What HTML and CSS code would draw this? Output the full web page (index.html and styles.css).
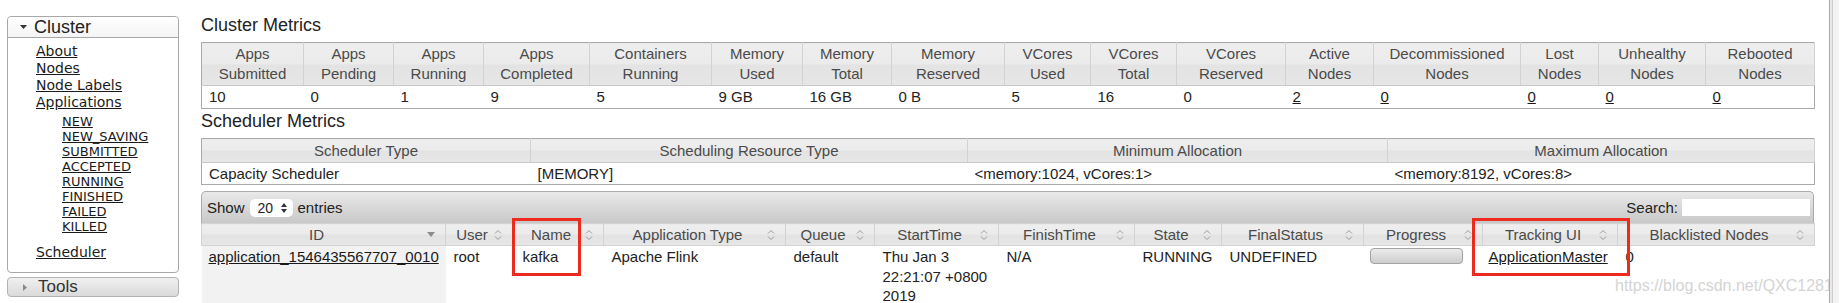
FILE: index.html
```html
<!DOCTYPE html>
<html>
<head>
<meta charset="utf-8">
<title>All Applications</title>
<link rel="stylesheet" href="styles.css">
</head>
<body>
<div class="sidebar">
  <div class="acc-box">
    <div class="acc-head"><svg class="tri-down" width="7" height="4" viewBox="0 0 7 4"><polygon points="0,0 7,0 3.5,4" fill="#333"/></svg><span>Cluster</span></div>
    <div class="acc-body">
      <a href="#" class="nav">About</a>
      <a href="#" class="nav">Nodes</a>
      <a href="#" class="nav">Node Labels</a>
      <a href="#" class="nav">Applications</a>
      <div class="sub">
        <a href="#">NEW</a>
        <a href="#">NEW_SAVING</a>
        <a href="#">SUBMITTED</a>
        <a href="#">ACCEPTED</a>
        <a href="#">RUNNING</a>
        <a href="#">FINISHED</a>
        <a href="#">FAILED</a>
        <a href="#">KILLED</a>
      </div>
      <a href="#" class="nav sched">Scheduler</a>
    </div>
  </div>
  <div class="tools"><svg class="tri-right" width="4" height="7" viewBox="0 0 4 7"><polygon points="0,0 4,3.5 0,7" fill="#8a8a8a"/></svg><span>Tools</span></div>
</div>

<div class="main">
  <h3 class="title">Cluster Metrics</h3>
  <table class="grid metrics">
    <colgroup>
      <col class="m1"><col class="m2"><col class="m3"><col class="m4"><col class="m5"><col class="m6"><col class="m7"><col class="m8"><col class="m9"><col class="m10"><col class="m11"><col class="m12"><col class="m13"><col class="m14"><col class="m15"><col class="m16">
    </colgroup>
    <tr>
      <th>Apps<br>Submitted</th><th>Apps<br>Pending</th><th>Apps<br>Running</th><th>Apps<br>Completed</th><th>Containers<br>Running</th><th>Memory<br>Used</th><th>Memory<br>Total</th><th>Memory<br>Reserved</th><th>VCores<br>Used</th><th>VCores<br>Total</th><th>VCores<br>Reserved</th><th>Active<br>Nodes</th><th>Decommissioned<br>Nodes</th><th>Lost<br>Nodes</th><th>Unhealthy<br>Nodes</th><th>Rebooted<br>Nodes</th>
    </tr>
    <tr>
      <td>10</td><td>0</td><td>1</td><td>9</td><td>5</td><td>9 GB</td><td>16 GB</td><td>0 B</td><td>5</td><td>16</td><td>0</td><td><a href="#">2</a></td><td><a href="#">0</a></td><td><a href="#">0</a></td><td><a href="#">0</a></td><td><a href="#">0</a></td>
    </tr>
  </table>

  <h3 class="title second">Scheduler Metrics</h3>
  <table class="grid sched-t">
    <colgroup><col class="s1"><col class="s2"><col class="s3"><col class="s4"></colgroup>
    <tr><th>Scheduler Type</th><th>Scheduling Resource Type</th><th>Minimum Allocation</th><th>Maximum Allocation</th></tr>
    <tr><td>Capacity Scheduler</td><td>[MEMORY]</td><td>&lt;memory:1024, vCores:1&gt;</td><td>&lt;memory:8192, vCores:8&gt;</td></tr>
  </table>

  <div class="apps">
    <div class="toolbar">
      <div class="show">Show <span class="select">20 <svg width="6" height="10" viewBox="0 0 6 10"><polygon points="0,4 3,0 6,4" fill="#333"/><polygon points="0,6 6,6 3,10" fill="#333"/></svg></span> entries</div>
      <div class="search">Search: <span class="input"></span></div>
    </div>
    <table class="apps-t">
      <colgroup>
        <col class="a1"><col class="a2"><col class="a3"><col class="a4"><col class="a5"><col class="a6"><col class="a7"><col class="a8"><col class="a9"><col class="a10"><col class="a11"><col class="a12">
      </colgroup>
      <tr>
        <th><div class="thc"><span class="lbl">ID</span><svg class="desc" width="8" height="5" viewBox="0 0 8 5"><polygon points="0,0 8,0 4,5" fill="#8c8c8c"/></svg></div></th>
        <th><div class="thc"><span class="lbl">User</span><svg class="si" width="8" height="12" viewBox="0 0 8 12"><path d="M1 4.5 4 1.5 7 4.5M1 7.5 4 10.5 7 7.5" fill="none" stroke="#9a9a9a"/></svg></div></th>
        <th><div class="thc"><span class="lbl">Name</span><svg class="si" width="8" height="12" viewBox="0 0 8 12"><path d="M1 4.5 4 1.5 7 4.5M1 7.5 4 10.5 7 7.5" fill="none" stroke="#9a9a9a"/></svg></div></th>
        <th><div class="thc"><span class="lbl">Application Type</span><svg class="si" width="8" height="12" viewBox="0 0 8 12"><path d="M1 4.5 4 1.5 7 4.5M1 7.5 4 10.5 7 7.5" fill="none" stroke="#9a9a9a"/></svg></div></th>
        <th><div class="thc"><span class="lbl">Queue</span><svg class="si" width="8" height="12" viewBox="0 0 8 12"><path d="M1 4.5 4 1.5 7 4.5M1 7.5 4 10.5 7 7.5" fill="none" stroke="#9a9a9a"/></svg></div></th>
        <th><div class="thc"><span class="lbl">StartTime</span><svg class="si" width="8" height="12" viewBox="0 0 8 12"><path d="M1 4.5 4 1.5 7 4.5M1 7.5 4 10.5 7 7.5" fill="none" stroke="#9a9a9a"/></svg></div></th>
        <th><div class="thc"><span class="lbl">FinishTime</span><svg class="si" width="8" height="12" viewBox="0 0 8 12"><path d="M1 4.5 4 1.5 7 4.5M1 7.5 4 10.5 7 7.5" fill="none" stroke="#9a9a9a"/></svg></div></th>
        <th><div class="thc"><span class="lbl">State</span><svg class="si" width="8" height="12" viewBox="0 0 8 12"><path d="M1 4.5 4 1.5 7 4.5M1 7.5 4 10.5 7 7.5" fill="none" stroke="#9a9a9a"/></svg></div></th>
        <th><div class="thc"><span class="lbl">FinalStatus</span><svg class="si" width="8" height="12" viewBox="0 0 8 12"><path d="M1 4.5 4 1.5 7 4.5M1 7.5 4 10.5 7 7.5" fill="none" stroke="#9a9a9a"/></svg></div></th>
        <th><div class="thc"><span class="lbl">Progress</span><svg class="si" width="8" height="12" viewBox="0 0 8 12"><path d="M1 4.5 4 1.5 7 4.5M1 7.5 4 10.5 7 7.5" fill="none" stroke="#9a9a9a"/></svg></div></th>
        <th><div class="thc"><span class="lbl">Tracking UI</span><svg class="si" width="8" height="12" viewBox="0 0 8 12"><path d="M1 4.5 4 1.5 7 4.5M1 7.5 4 10.5 7 7.5" fill="none" stroke="#9a9a9a"/></svg></div></th>
        <th><div class="thc"><span class="lbl">Blacklisted Nodes</span><svg class="si" width="8" height="12" viewBox="0 0 8 12"><path d="M1 4.5 4 1.5 7 4.5M1 7.5 4 10.5 7 7.5" fill="none" stroke="#9a9a9a"/></svg></div></th>
      </tr>
      <tr>
        <td class="sorted"><a href="#">application_1546435567707_0010</a></td>
        <td>root</td>
        <td class="name-cell">kafka</td>
        <td>Apache Flink</td>
        <td>default</td>
        <td>Thu Jan 3 22:21:07 +0800 2019</td>
        <td>N/A</td>
        <td>RUNNING</td>
        <td>UNDEFINED</td>
        <td class="prog-cell"><div class="progress"></div></td>
        <td class="track-cell"><a href="#">ApplicationMaster</a></td>
        <td>0</td>
      </tr>
    </table>
    <div class="mark mark-name"></div>
    <div class="mark mark-track"></div>
  </div>
</div>

<div class="strip"></div>
<div class="watermark">https://blog.csdn.net/QXC1281</div>
</body>
</html>
```

FILE: styles.css
```css
html, body {
  margin: 0;
  padding: 0;
  height: 303px;
  overflow: hidden;
  background: #fff;
}
body {
  display: flex;
  align-items: flex-start;
  font-family: "Liberation Sans", Arial, sans-serif;
  color: #222;
  position: relative;
}
a { color: #1a1a1a; text-decoration: underline; }

/* ---------- sidebar ---------- */
.sidebar {
  flex: none;
  width: 172px;
  margin: 16px 0 0 7px;
}
.acc-box {
  border: 1px solid #a8a8a8;
  border-radius: 4px;
  background: #fff;
}
.acc-head {
  height: 20px;
  border-bottom: 1px solid #a8a8a8;
  border-radius: 4px 4px 0 0;
  background: linear-gradient(#ffffff, #f4f4f4);
  display: flex;
  align-items: center;
  padding-left: 12px;
  font-size: 18px;
  color: #222;
}
.acc-head .tri-down { margin-right: 7px; }
.acc-body {
  padding: 5px 0 11px 28px;
  font-family: "DejaVu Sans", Verdana, sans-serif;
  font-size: 14px;
  line-height: 17px;
}
.acc-body a { display: block; width: max-content; }
.sub {
  margin: 3px 0 0 26px;
  font-size: 13px;
  line-height: 15px;
}
.acc-body .sched { margin-top: 10px; }
.tools {
  margin-top: 4px;
  height: 18px;
  border: 1px solid #b3b3b3;
  border-radius: 4px;
  background: linear-gradient(#f0f0f0, #dadada);
  display: flex;
  align-items: center;
  padding-left: 15px;
  font-size: 17px;
  color: #333;
}
.tools .tri-right { margin-right: 11px; }

/* ---------- main ---------- */
.main {
  flex: none;
  width: 1613px;
  margin-left: 22px;
  padding-top: 14px;
}
.title {
  margin: 0 0 6px;
  font-size: 18px;
  font-weight: normal;
  line-height: 22px;
  color: #222;
}
.title.second { margin-top: 1px; }

.grid {
  width: 1613px;
  table-layout: fixed;
  border-collapse: collapse;
  border: 1px solid #a9a9a9;
  font-size: 15px;
}
.grid th, .apps-t th {
  font-weight: normal;
  color: #4a4a4a;
  background: linear-gradient(#eeeeee 0%, #ebebeb 50%, #e3e3e3 50%, #e6e6e6 100%);
  border-right: 1px solid #d2d2d2;
  border-bottom: 1px solid #c9c9c9;
  padding: 0 2px;
  text-align: center;
  white-space: nowrap;
}
.grid td {
  padding: 0 7px;
  white-space: nowrap;
  color: #222;
}
.metrics th { height: 42px; line-height: 20px; }
.metrics td { height: 22px; line-height: 22px; }
.sched-t th { height: 23px; line-height: 23px; }
.sched-t td { height: 21px; line-height: 21px; }

.m1 { width: 102px; } .m2 { width: 90px; } .m3 { width: 90px; } .m4 { width: 106px; }
.m5 { width: 122px; } .m6 { width: 91px; } .m7 { width: 89px; } .m8 { width: 113px; }
.m9 { width: 86px; } .m10 { width: 86px; } .m11 { width: 109px; } .m12 { width: 88px; }
.m13 { width: 147px; } .m14 { width: 78px; } .m15 { width: 107px; } .m16 { width: 109px; }

.s1 { width: 329px; } .s2 { width: 437px; } .s3 { width: 420px; } .s4 { width: 427px; }

/* ---------- applications ---------- */
.apps {
  position: relative;
  margin-top: 6px;
}
.toolbar {
  height: 31px;
  border: 1px solid #ababab;
  border-bottom: none;
  border-radius: 5px 5px 0 0;
  background: linear-gradient(#e9e9e9, #c8c8c8);
  display: flex;
  justify-content: space-between;
  align-items: center;
  padding: 0 3px 0 5px;
  font-size: 15px;
  color: #222;
}
.show { display: flex; align-items: center; }
.select {
  display: inline-flex;
  align-items: center;
  justify-content: space-between;
  width: 43px;
  height: 18px;
  box-sizing: border-box;
  margin: 0 5px;
  padding: 0 6px 0 8px;
  background: #fff;
  border-radius: 5px;
  font-size: 14px;
}
.search { display: flex; align-items: center; }
.input {
  display: inline-block;
  width: 128px;
  height: 17px;
  margin-left: 4px;
  background: #fff;
}

.apps-t {
  width: 1613px;
  table-layout: fixed;
  border-collapse: collapse;
  font-size: 15px;
}
.apps-t th {
  height: 21px;
  padding: 0 10px;
  border: 1px solid #d3d3d3;
}
.thc {
  display: flex;
  align-items: center;
  gap: 6px;
}
.lbl { flex: 1; text-align: center; }
.si, .desc { flex: none; }
.apps-t td {
  vertical-align: top;
  padding: 1px 8px 8px;
  line-height: 19.5px;
  color: #222;
}
.apps-t td.sorted {
  background: #f2f2f2;
  padding-left: 7px;
  padding-right: 0;
  white-space: nowrap;
}
.apps-t td.name-cell { padding-left: 10px; }
.apps-t td.prog-cell, .apps-t td.track-cell { padding-left: 6px; }
.progress {
  width: 91px;
  height: 14px;
  margin-top: 1px;
  border: 1px solid #a4a4a4;
  border-radius: 4px;
  background: linear-gradient(#ececec, #cdcdcd);
}

.a1 { width: 244px; } .a2 { width: 67px; } .a3 { width: 91px; } .a4 { width: 182px; }
.a5 { width: 89px; } .a6 { width: 124px; } .a7 { width: 136px; } .a8 { width: 87px; }
.a9 { width: 142px; } .a10 { width: 119px; } .a11 { width: 135px; } .a12 { width: 197px; }

.mark {
  position: absolute;
  top: 27px;
  height: 58px;
  box-sizing: border-box;
  border: 3px solid #ec2a1e;
}
.mark-name { left: 311px; width: 69px; }
.mark-track { left: 1271px; width: 158px; }

/* ---------- right strip & watermark ---------- */
.strip {
  flex: none;
  position: relative;
  z-index: 2;
  width: 10px;
  height: 303px;
  margin-left: 15px;
  background: linear-gradient(to right, #acacac 0 1px, #e8e8e8 1px 3px, #cdcdcd 3px 4px, #f3f3f3 4px);
}
.watermark {
  position: absolute;
  left: 1615px;
  top: 277px;
  font-size: 16px;
  line-height: 18px;
  color: #d4d4d4;
  white-space: nowrap;
}
```
